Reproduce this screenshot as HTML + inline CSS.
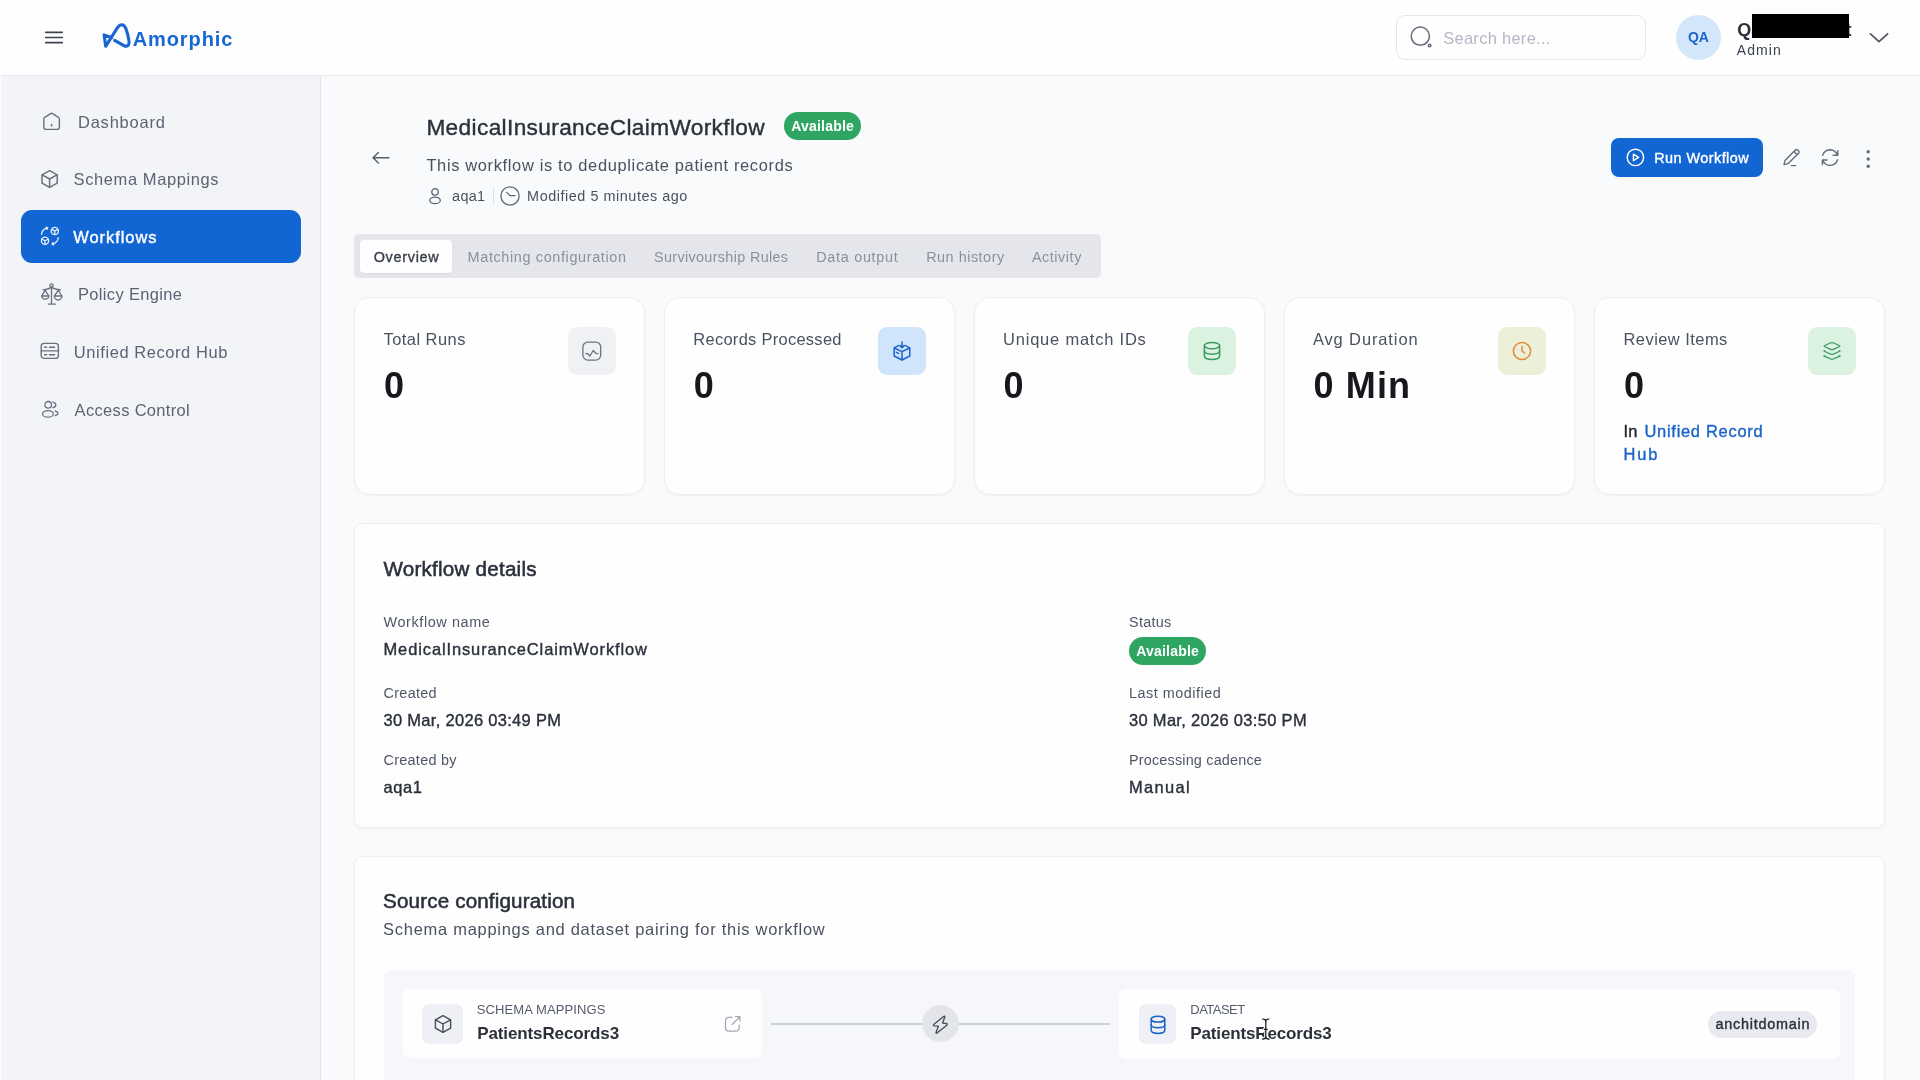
<!DOCTYPE html>
<html lang="en">
<head>
<meta charset="utf-8">
<title>Amorphic - MedicalInsuranceClaimWorkflow</title>
<style>
html,body{margin:0;padding:0}
body{width:1920px;height:1080px;overflow:hidden;position:relative;background:#f9fafb;font-family:"Liberation Sans",sans-serif}
.a{position:absolute;box-sizing:border-box}
.t{position:absolute;margin:0;font-weight:400;white-space:pre;line-height:normal;font-family:"Liberation Sans",sans-serif}
.tl{position:absolute;left:0;top:0;width:1920px;height:1080px;will-change:transform}
svg{position:absolute;overflow:visible}
.card{position:absolute;box-sizing:border-box;background:#fefefe;border:1px solid #eeeff2;box-shadow:0 1px 3px rgba(20,30,50,.04)}
.ib{position:absolute;width:48px;height:48px;border-radius:9px}
</style>
</head>
<body>
<header>
<!-- header -->
<div class="a" style="left:0;top:0;width:1920px;height:76px;background:#fefefe;border-bottom:1px solid #eaebee"></div>
<svg style="left:45px;top:31px" width="18" height="13" viewBox="0 0 18 13" fill="none" stroke="#3d4350" stroke-width="1.7" stroke-linecap="round"><path d="M.8 1.3h16.4M.8 6.5h16.4M.8 11.7h16.4"/></svg>
<!-- logo mark -->
<svg style="left:102px;top:22.5px" width="30" height="26" viewBox="0 0 30 26" fill="none" stroke="#1766d2" stroke-width="3.1" stroke-linecap="round" stroke-linejoin="round"><path d="M9.7 14.7 L2.1 11.9 L3.7 23.3 L15 5.4 C16.8 2.5 18.2 1.7 19.6 1.7 C21.2 1.7 22.8 2.7 23.8 5.4 C25.4 9.6 26.4 14 27 17.9 C27.7 21.8 25.6 24.2 22 22.7 L12.6 17.3"/></svg>
<!-- search -->
<div class="a" style="left:1396px;top:15px;width:250px;height:45px;border:1px solid #e5e7eb;border-radius:9px;background:#fefefe"></div>
<svg style="left:1409px;top:26px" width="24" height="24" viewBox="0 0 24 24" fill="none" stroke="#666c7a" stroke-width="1.5"><circle cx="11.3" cy="10.2" r="9.1"/><circle cx="20.6" cy="19.5" r="1.3"/></svg>
<!-- avatar -->
<div class="a" style="left:1676px;top:15px;width:45px;height:45px;border-radius:50%;background:#d3e6fa"></div>
<div class="a" style="left:1752.3px;top:14px;width:96.7px;height:23.8px;background:#000;z-index:5"></div>
<svg style="left:1869px;top:32.3px" width="20" height="12" viewBox="0 0 20 12" fill="none" stroke="#4d5361" stroke-width="1.7" stroke-linecap="round" stroke-linejoin="round"><path d="M1.4 1.8 L10 9.6 L18.6 1.8"/></svg>
<div class="tl">
<div class="t" style="left:132.7px;top:28.3px;font-size:20px;color:#1766d2;font-weight:700;letter-spacing:0.91px;">Amorphic</div>
<div class="t" style="left:1443.2px;top:29.1px;font-size:16.48px;color:#b3b8c4;letter-spacing:0.29px;">Search here...</div>
<div class="t" style="left:1688.0px;top:29.0px;font-size:14px;color:#1c64cc;font-weight:700;letter-spacing:-0.10px;">QA</div>
<div class="t" style="left:1737.2px;top:19.9px;font-size:18px;color:#2b2f38;font-weight:700;">Qa</div>
<div class="t" style="left:1845.4px;top:19.9px;font-size:18px;color:#2b2f38;font-weight:700;">t</div>
<div class="t" style="left:1736.8px;top:41.7px;font-size:14px;color:#3b4250;letter-spacing:1.08px;">Admin</div>
</div>
</header>

<aside>
<nav>
<!-- sidebar -->
<div class="a" style="left:0;top:76px;width:321px;height:1004px;background:#f3f4f8;border-right:1px solid #e3e5ea;border-left:1px solid #fdfdfe"></div>
<div class="a" style="left:20.5px;top:210px;width:280px;height:52.5px;border-radius:11px;background:#1266d4"></div>
<!-- dashboard icon -->
<svg style="left:42px;top:112px" width="20" height="20" viewBox="0 0 20 20" fill="none" stroke="#697180" stroke-width="1.4" stroke-linecap="round" stroke-linejoin="round"><path d="M1.8 7.2 Q1.8 6 2.8 5.3 L8.6 1.6 Q9.6 1 10.6 1.6 L16.4 5.3 Q17.4 6 17.4 7.2 V15 Q17.4 17.4 15 17.4 H4.2 Q1.8 17.4 1.8 15 Z"/><path d="M9.6 12.4v1.6"/></svg>
<!-- cube icon -->
<svg style="left:40px;top:169px" width="20" height="20" viewBox="0 0 20 20" fill="none" stroke="#697180" stroke-width="1.5" stroke-linecap="round" stroke-linejoin="round"><path d="M9.6 1.6 L17.2 5.8 V14.2 L9.6 18.4 L2 14.2 V5.8 Z"/><path d="M2.2 5.9 L9.6 10 L17 5.9M9.6 10 V18.2"/></svg>
<!-- workflows icon -->
<svg style="left:40px;top:226px" width="20" height="20" viewBox="0 0 20 20" fill="none" stroke="#e9f0fb" stroke-width="1.3" stroke-linecap="round" stroke-linejoin="round"><circle cx="14.8" cy="5" r="3.6"/><path d="M14.8 5 V8.4M14.8 5 L11.8 3.4M14.8 5 L17.8 3.4"/><circle cx="5" cy="14.8" r="3.6"/><path d="M5 14.8 V18.2M5 14.8 L2 13.2M5 14.8 L8 13.2"/><path d="M1.6 8.4 Q1.8 3.2 7.6 1.8M6 1.2 L7.8 1.8 L6.8 3.4"/><path d="M18.2 11.6 Q18 16.8 12.2 18.2M13.8 18.8 L12 18.2 L13 16.6"/></svg>
<!-- scales icon -->
<svg style="left:40px;top:283px" width="24" height="23" viewBox="0 0 24 23" fill="none" stroke="#697180" stroke-width="1.35" stroke-linecap="round" stroke-linejoin="round"><circle cx="11.5" cy="2.5" r="1.6"/><path d="M11.5 4.2 V20.8M8.3 21.1 H15.3M3.2 7 Q8 6.4 11.5 4.4 Q15 6.4 20.4 7"/><path d="M5.2 7.4 L1.6 13 A3.7 3.9 0 0 0 8.9 13 Z M1.6 13 H8.9"/><path d="M18.2 7.4 L14.4 13 A3.7 3.9 0 0 0 21.9 13 Z M14.4 13 H21.9"/></svg>
<!-- record hub icon -->
<svg style="left:40px;top:342px" width="20" height="18" viewBox="0 0 20 18" fill="none" stroke="#697180" stroke-width="1.4" stroke-linecap="round" stroke-linejoin="round"><rect x="1.2" y="1.4" width="17.2" height="15" rx="3"/><path d="M1.4 8.9 H18.2M4.6 5.2 H6.6M9.4 5.2 H14.6M4.6 12.7 H6.6M9.4 12.7 H14.6"/></svg>
<!-- users icon -->
<svg style="left:41px;top:400px" width="20" height="19" viewBox="0 0 20 19" fill="none" stroke="#697180" stroke-width="1.3" stroke-linecap="round" stroke-linejoin="round"><circle cx="7.2" cy="4.8" r="3.3"/><ellipse cx="6.9" cy="13.9" rx="5.4" ry="3.3"/><path d="M11.9 2.1 Q14.9 2.6 14.8 4.9 Q14.7 7.2 11.9 7.6M14.1 10.9 Q17 11.9 16.9 13.4 Q16.8 14.9 14.1 15.7"/></svg>
<div class="tl">
<div class="t" style="left:78.0px;top:112.9px;font-size:16.48px;color:#5a6474;letter-spacing:0.78px;">Dashboard</div>
<div class="t" style="left:73.6px;top:170.4px;font-size:16.48px;color:#5a6474;letter-spacing:0.61px;">Schema Mappings</div>
<div class="t" style="left:73.2px;top:227.9px;font-size:16.48px;color:#ffffff;letter-spacing:0.97px;-webkit-text-stroke:0.38px #ffffff;">Workflows</div>
<div class="t" style="left:78.0px;top:285.4px;font-size:16.48px;color:#5a6474;letter-spacing:0.35px;">Policy Engine</div>
<div class="t" style="left:73.8px;top:342.5px;font-size:16.48px;color:#5a6474;letter-spacing:0.58px;">Unified Record Hub</div>
<div class="t" style="left:74.6px;top:400.6px;font-size:16.48px;color:#5a6474;letter-spacing:0.34px;">Access Control</div>
</div>
</nav>
</aside>

<main>
<section>
<!-- back arrow -->
<svg style="left:371px;top:150px" width="20" height="16" viewBox="0 0 20 16" fill="none" stroke="#565d6b" stroke-width="1.4" stroke-linecap="round" stroke-linejoin="round"><path d="M18 7.8 H2M7.4 2.6 L2 7.8 L7.4 13"/></svg>
<!-- title badge -->
<div class="a" style="left:784px;top:112px;width:77px;height:28px;border-radius:14px;background:#2fa562"></div>
<!-- user + clock icons -->
<svg style="left:428px;top:187px" width="14" height="18" viewBox="0 0 14 18" fill="none" stroke="#5f6675" stroke-width="1.3"><circle cx="7" cy="4.9" r="3.2"/><ellipse cx="7" cy="13.4" rx="5.3" ry="3.3"/></svg>
<div class="a" style="left:493px;top:187px;width:1px;height:18px;background:#dcdfe4"></div>
<svg style="left:500px;top:185.5px" width="20" height="20" viewBox="0 0 20 20" fill="none" stroke="#5f6675" stroke-width="1.3" stroke-linecap="round" stroke-linejoin="round"><circle cx="10" cy="10" r="9.1"/><path d="M6.6 6.4 L10 9.6 H15.2"/></svg>
<!-- run workflow button -->
<div class="a" style="left:1611px;top:138px;width:152px;height:38.7px;border-radius:8px;background:#1266d4"></div>
<svg style="left:1626px;top:148px" width="19" height="19" viewBox="0 0 19 19" fill="none" stroke="#fff" stroke-width="1.4" stroke-linejoin="round"><circle cx="9.4" cy="9.4" r="8.2"/><path d="M7.4 6.2 L12.6 9.4 L7.4 12.6 Z"/></svg>
<!-- pencil -->
<svg style="left:1782px;top:148.3px" width="20" height="20" viewBox="0 0 20 20" fill="none" stroke="#636a78" stroke-width="1.4" stroke-linecap="round" stroke-linejoin="round"><path d="M2 16.6 L3 12.4 L13.6 1.8 Q14.6 1 15.8 2 L16.6 2.8 Q17.6 4 16.8 5 L6.2 15.6 Z M12 3.6 L15 6.6M9.4 17.6 H13.6"/></svg>
<!-- refresh -->
<svg style="left:1820px;top:147.5px;transform:scaleX(-1)" width="20" height="20" viewBox="0 0 20 20" fill="none" stroke="#636a78" stroke-width="1.4" stroke-linecap="round" stroke-linejoin="round"><path d="M17.4 7.4 Q15.6 2 10 1.8 Q4.6 2 2.6 7 M2.2 2.6 V7.2 H6.8"/><path d="M2.4 11.8 Q4.2 17.2 9.8 17.4 Q15.2 17.2 17.2 12.2 M17.6 16.6 V12 H13"/></svg>
<!-- dots -->
<svg style="left:1864px;top:148.6px" width="8" height="20" viewBox="0 0 8 20" fill="#636a78"><circle cx="4.2" cy="2.8" r="1.7"/><circle cx="4.2" cy="10" r="1.7"/><circle cx="4.2" cy="17.2" r="1.7"/></svg>
<div class="tl">
<h1 class="t" style="left:426.4px;top:113.7px;font-size:22.66px;color:#2b303b;letter-spacing:0.36px;-webkit-text-stroke:0.4px #2b303b;">MedicalInsuranceClaimWorkflow</h1>
<div class="t" style="left:791.2px;top:118.3px;font-size:14px;color:#ffffff;font-weight:700;letter-spacing:0.22px;">Available</div>
<p class="t" style="left:426.4px;top:155.9px;font-size:16.48px;color:#4a5160;letter-spacing:0.64px;">This workflow is to deduplicate patient records</p>
<div class="t" style="left:452.1px;top:187.8px;font-size:14.42px;color:#4a5160;letter-spacing:0.28px;">aqa1</div>
<div class="t" style="left:527.1px;top:187.8px;font-size:14.42px;color:#4a5160;letter-spacing:0.54px;">Modified 5 minutes ago</div>
<div class="t" style="left:1654.2px;top:150.3px;font-size:14.42px;color:#ffffff;letter-spacing:0.46px;-webkit-text-stroke:0.38px #ffffff;">Run Workflow</div>
</div>
</section>

<nav>
<!-- tabs -->
<div class="a" style="left:354px;top:234px;width:747px;height:44px;border-radius:5px;background:#e4e6eb"></div>
<div class="a" style="left:360px;top:239.5px;width:91.8px;height:33.5px;border-radius:4px;background:#fefefe;box-shadow:0 1px 2px rgba(0,0,0,.06)"></div>
<div class="tl">
<div class="t" style="left:373.7px;top:248.8px;font-size:14.42px;color:#3a3f4b;letter-spacing:0.71px;-webkit-text-stroke:0.38px #3a3f4b;">Overview</div>
<div class="t" style="left:467.6px;top:248.8px;font-size:14.42px;color:#8b909c;letter-spacing:0.64px;">Matching configuration</div>
<div class="t" style="left:654.0px;top:248.8px;font-size:14.42px;color:#8b909c;letter-spacing:0.33px;">Survivourship Rules</div>
<div class="t" style="left:816.2px;top:248.8px;font-size:14.42px;color:#8b909c;letter-spacing:0.71px;">Data output</div>
<div class="t" style="left:926.2px;top:248.8px;font-size:14.42px;color:#8b909c;letter-spacing:0.51px;">Run history</div>
<div class="t" style="left:1031.9px;top:248.8px;font-size:14.42px;color:#8b909c;letter-spacing:0.55px;">Activity</div>
</div>
</nav>

<section>
<!-- stat cards -->
<div class="card" style="left:353.8px;top:296.7px;width:291px;height:198.3px;border-radius:16px"></div>
<div class="card" style="left:663.9px;top:296.7px;width:291px;height:198.3px;border-radius:16px"></div>
<div class="card" style="left:974.0px;top:296.7px;width:291px;height:198.3px;border-radius:16px"></div>
<div class="card" style="left:1284.1px;top:296.7px;width:291px;height:198.3px;border-radius:16px"></div>
<div class="card" style="left:1594.2px;top:296.7px;width:291px;height:198.3px;border-radius:16px"></div>
<div class="ib" style="left:568px;top:327px;background:#f0f1f5"></div>
<div class="ib" style="left:877.8px;top:327px;background:#d0e5fb"></div>
<div class="ib" style="left:1187.6px;top:327px;background:#dbf2e1"></div>
<div class="ib" style="left:1498.3px;top:327px;background:#ecf0d8"></div>
<div class="ib" style="left:1807.8px;top:327px;background:#dbf2e1"></div>
<!-- stat icons -->
<svg style="left:582px;top:341px" width="20" height="20" viewBox="0 0 20 20" fill="none" stroke="#6a7180" stroke-width="1.3" stroke-linecap="round" stroke-linejoin="round"><rect x="0.9" y="1.1" width="17.8" height="18" rx="5"/><path d="M3.8 12.6 H5.8 L7.7 15.1 L11.3 9.5 L13.4 12 Q14.2 12.6 16 12.6"/></svg>
<svg style="left:891.8px;top:341px" width="20" height="20" viewBox="0 0 20 20" fill="none" stroke="#1c64cc" stroke-width="1.5" stroke-linecap="round" stroke-linejoin="round"><path d="M10 1 V6.6M7.8 4.6 L10 6.8 L12.2 4.6"/><path d="M6.4 4.6 L2.2 6.8 V15 L10 19 L17.8 15 V6.8 L13.6 4.6"/><path d="M2.4 7 L10 10.6 L17.6 7M10 10.6 V18.8M4.4 11.4 L6.6 12.4"/></svg>
<svg style="left:1201.6px;top:341px" width="20" height="20" viewBox="0 0 20 20" fill="none" stroke="#3a9a5f" stroke-width="1.5" stroke-linecap="round" stroke-linejoin="round"><ellipse cx="10" cy="4.6" rx="7.6" ry="3.2"/><path d="M2.4 4.6 V15.4 Q2.6 18.4 10 18.6 Q17.4 18.4 17.6 15.4 V4.6"/><path d="M2.4 10 Q2.6 13 10 13.2 Q17.4 13 17.6 10"/></svg>
<svg style="left:1512.4px;top:341px" width="20" height="20" viewBox="0 0 20 20" fill="none" stroke="#e08a3c" stroke-width="1.5" stroke-linecap="round" stroke-linejoin="round"><circle cx="10" cy="10" r="8.6"/><path d="M10 5.4 V10 L12.6 12"/></svg>
<svg style="left:1821.8px;top:342px" width="20" height="18.6" viewBox="0 0 20 21" preserveAspectRatio="none" fill="none" stroke="#3a9a5f" stroke-width="1.4" stroke-linecap="round" stroke-linejoin="round"><path d="M8.8 0.9 Q10 0.3 11.2 0.9 L17.2 3.9 Q18.4 4.6 17.2 5.3 L11.2 8.3 Q10 8.9 8.8 8.3 L2.8 5.3 Q1.6 4.6 2.8 3.9 Z"/><path d="M2.2 9.6 Q1.8 10.3 2.8 10.8 L8.8 13.8 Q10 14.4 11.2 13.8 L17.2 10.8 Q18.2 10.3 17.8 9.6"/><path d="M2.2 15 Q1.8 15.7 2.8 16.2 L8.8 19.2 Q10 19.8 11.2 19.2 L17.2 16.2 Q18.2 15.7 17.8 15"/></svg>
<div class="tl">
<div class="t" style="left:383.5px;top:329.9px;font-size:16.48px;color:#4a5160;letter-spacing:0.46px;">Total Runs</div>
<div class="t" style="left:693.3px;top:329.9px;font-size:16.48px;color:#4a5160;letter-spacing:0.28px;">Records Processed</div>
<div class="t" style="left:1003.1px;top:329.9px;font-size:16.48px;color:#4a5160;letter-spacing:0.79px;">Unique match IDs</div>
<div class="t" style="left:1312.9px;top:329.9px;font-size:16.48px;color:#4a5160;letter-spacing:0.89px;">Avg Duration</div>
<div class="t" style="left:1623.5px;top:329.9px;font-size:16.48px;color:#4a5160;letter-spacing:0.45px;">Review Items</div>
<div class="t" style="left:384.0px;top:365.0px;font-size:36px;color:#16181d;font-weight:700;">0</div>
<div class="t" style="left:693.8px;top:365.0px;font-size:36px;color:#16181d;font-weight:700;">0</div>
<div class="t" style="left:1003.6px;top:365.0px;font-size:36px;color:#16181d;font-weight:700;">0</div>
<div class="t" style="left:1313.4px;top:365.0px;font-size:36px;color:#16181d;font-weight:700;letter-spacing:1.17px;">0 Min</div>
<div class="t" style="left:1624.0px;top:365.0px;font-size:36px;color:#16181d;font-weight:700;">0</div>
<div class="t" style="left:1623.6px;top:421.8px;font-size:16.48px;color:#23272f;-webkit-text-stroke:0.38px #23272f;">In</div>
<div class="t" style="left:1644.5px;top:421.8px;font-size:16.48px;color:#1b63c8;letter-spacing:0.71px;-webkit-text-stroke:0.38px #1b63c8;">Unified Record</div>
<div class="t" style="left:1623.6px;top:445.2px;font-size:16.48px;color:#1b63c8;letter-spacing:1.79px;-webkit-text-stroke:0.38px #1b63c8;">Hub</div>
</div>
</section>

<section>
<!-- workflow details card -->
<div class="card" style="left:353.9px;top:523.4px;width:1531px;height:304.5px;border-radius:9px"></div>
<div class="a" style="left:1129px;top:637px;width:77px;height:28px;border-radius:14px;background:#2fa562"></div>
<div class="tl">
<h2 class="t" style="left:383.5px;top:556.7px;font-size:20.6px;color:#2b303b;letter-spacing:0.23px;-webkit-text-stroke:0.55px #2b303b;">Workflow details</h2>
<div class="t" style="left:383.5px;top:614.0px;font-size:14.42px;color:#4f5766;letter-spacing:0.61px;">Workflow name</div>
<div class="t" style="left:383.5px;top:640.1px;font-size:16.48px;color:#2b303b;letter-spacing:0.89px;-webkit-text-stroke:0.38px #2b303b;">MedicalInsuranceClaimWorkflow</div>
<div class="t" style="left:383.5px;top:685.3px;font-size:14.42px;color:#4f5766;letter-spacing:0.31px;">Created</div>
<div class="t" style="left:383.5px;top:711.2px;font-size:16.48px;color:#2b303b;letter-spacing:0.31px;-webkit-text-stroke:0.38px #2b303b;">30 Mar, 2026 03:49 PM</div>
<div class="t" style="left:383.5px;top:752.1px;font-size:14.42px;color:#4f5766;letter-spacing:0.28px;">Created by</div>
<div class="t" style="left:383.5px;top:777.5px;font-size:16.48px;color:#2b303b;letter-spacing:0.62px;-webkit-text-stroke:0.38px #2b303b;">aqa1</div>
<div class="t" style="left:1129.0px;top:614.0px;font-size:14.42px;color:#4f5766;letter-spacing:0.29px;">Status</div>
<div class="t" style="left:1136.2px;top:642.8px;font-size:14px;color:#ffffff;font-weight:700;letter-spacing:0.22px;">Available</div>
<div class="t" style="left:1129.0px;top:685.3px;font-size:14.42px;color:#4f5766;letter-spacing:0.51px;">Last modified</div>
<div class="t" style="left:1129.0px;top:711.2px;font-size:16.48px;color:#2b303b;letter-spacing:0.32px;-webkit-text-stroke:0.38px #2b303b;">30 Mar, 2026 03:50 PM</div>
<div class="t" style="left:1129.0px;top:752.1px;font-size:14.42px;color:#4f5766;letter-spacing:0.18px;">Processing cadence</div>
<div class="t" style="left:1129.0px;top:777.5px;font-size:16.48px;color:#2b303b;letter-spacing:1.34px;-webkit-text-stroke:0.38px #2b303b;">Manual</div>
</div>
</section>

<section>
<!-- source configuration card -->
<div class="card" style="left:353.9px;top:856.2px;width:1531px;height:260px;border-radius:9px"></div>
<div class="a" style="left:383.6px;top:969.6px;width:1471px;height:130px;background:#f6f7fa;border-radius:8px"></div>
<div class="a" style="left:403px;top:989px;width:359px;height:69px;background:#fefefe;border-radius:7px"></div>
<div class="a" style="left:1119px;top:989px;width:721px;height:69.5px;background:#fefefe;border-radius:7px"></div>
<div class="a" style="left:422px;top:1004px;width:41px;height:40px;background:#eef0f5;border-radius:7px"></div>
<svg style="left:432.5px;top:1014px" width="20" height="20" viewBox="0 0 20 20" fill="none" stroke="#474c57" stroke-width="1.4" stroke-linecap="round" stroke-linejoin="round"><path d="M10 1.6 L17.6 5.8 V14.2 L10 18.4 L2.4 14.2 V5.8 Z"/><path d="M2.6 5.9 L10 10 L17.4 5.9M10 10 V18.2"/></svg>
<svg style="left:723.6px;top:1015.4px" width="17.6" height="17.6" viewBox="0 0 19 19" fill="none" stroke="#a2a7b2" stroke-width="1.35" stroke-linecap="round" stroke-linejoin="round"><path d="M8.6 2.6 H5.6 Q1.6 2.6 1.6 6.6 V13.4 Q1.6 17.4 5.6 17.4 H12.4 Q16.4 17.4 16.4 13.4 V10.8"/><path d="M12.4 1.8 H17.2 V6.6M17 2 L8.8 10.2"/></svg>
<div class="a" style="left:771px;top:1023.3px;width:339px;height:1.4px;background:#cdd1d7"></div>
<div class="a" style="left:922px;top:1005.2px;width:37.3px;height:37.3px;border-radius:50%;background:#e3e5ea"></div>
<svg style="left:931px;top:1013.5px" width="19" height="21" viewBox="0 0 19 21" fill="none" stroke="#474c57" stroke-width="1.3" stroke-linecap="round" stroke-linejoin="round"><path d="M12.9 2.3 L2.7 10.5 Q2 11.6 3.3 11.8 L7.4 12.2 L5 18.5 Q4.9 19.7 6 19 L16.1 10.9 Q16.8 9.8 15.5 9.6 L11.6 9 L13.9 2.8 Q13.9 1.6 12.9 2.3 Z"/></svg>
<div class="a" style="left:1139px;top:1004px;width:37px;height:40px;background:#eef0f5;border-radius:7px"></div>
<svg style="left:1148.5px;top:1014.5px" width="18" height="20" viewBox="0 0 18 20" fill="none" stroke="#1c64cc" stroke-width="1.5" stroke-linecap="round" stroke-linejoin="round"><ellipse cx="9" cy="4.2" rx="6.8" ry="2.9"/><path d="M2.2 4.2 V15.4 Q2.4 18.2 9 18.4 Q15.6 18.2 15.8 15.4 V4.2"/><path d="M2.2 9.8 Q2.4 12.6 9 12.8 Q15.6 12.6 15.8 9.8"/></svg>
<div class="a" style="left:1708.2px;top:1011px;width:109px;height:27px;border-radius:14px;background:#e8eaef"></div>
<div class="tl">
<h2 class="t" style="left:383.1px;top:888.5px;font-size:20.6px;color:#2b303b;letter-spacing:0.16px;-webkit-text-stroke:0.55px #2b303b;">Source configuration</h2>
<p class="t" style="left:383.1px;top:920.0px;font-size:16.48px;color:#4a5160;letter-spacing:0.73px;">Schema mappings and dataset pairing for this workflow</p>
<div class="t" style="left:476.7px;top:1001.8px;font-size:13px;color:#555c6b;letter-spacing:0.12px;">SCHEMA MAPPINGS</div>
<div class="t" style="left:477.2px;top:1024.2px;font-size:17px;color:#2c303a;font-weight:700;letter-spacing:-0.11px;">PatientsRecords3</div>
<div class="t" style="left:1190.3px;top:1002.0px;font-size:13px;color:#555c6b;letter-spacing:-0.54px;">DATASET</div>
<div class="t" style="left:1190.3px;top:1024.3px;font-size:17px;color:#2c303a;font-weight:700;letter-spacing:-0.14px;">PatientsRecords3</div>
<div class="t" style="left:1715.5px;top:1016.4px;font-size:14.42px;color:#2b303b;letter-spacing:0.75px;-webkit-text-stroke:0.38px #2b303b;">anchitdomain</div>
</div>
<!-- I-beam cursor -->
<svg style="left:1261.2px;top:1018px" width="10" height="23" viewBox="0 0 10 23" fill="none" stroke-linecap="round"><path d="M1.6 1 Q4.8 1 4.8 3.4 V18.8 Q4.8 21.2 1.6 21.2M8 1 Q4.8 1 4.8 3.4M4.8 18.8 Q4.8 21.2 8 21.2M3.4 11.4 H6.2" stroke="#fdfdfd" stroke-width="3.2"/><path d="M1.6 1 Q4.8 1 4.8 3.4 V18.8 Q4.8 21.2 1.6 21.2M8 1 Q4.8 1 4.8 3.4M4.8 18.8 Q4.8 21.2 8 21.2M3.4 11.4 H6.2" stroke="#111" stroke-width="1.2"/></svg>
</section>
</main>
</body>
</html>
